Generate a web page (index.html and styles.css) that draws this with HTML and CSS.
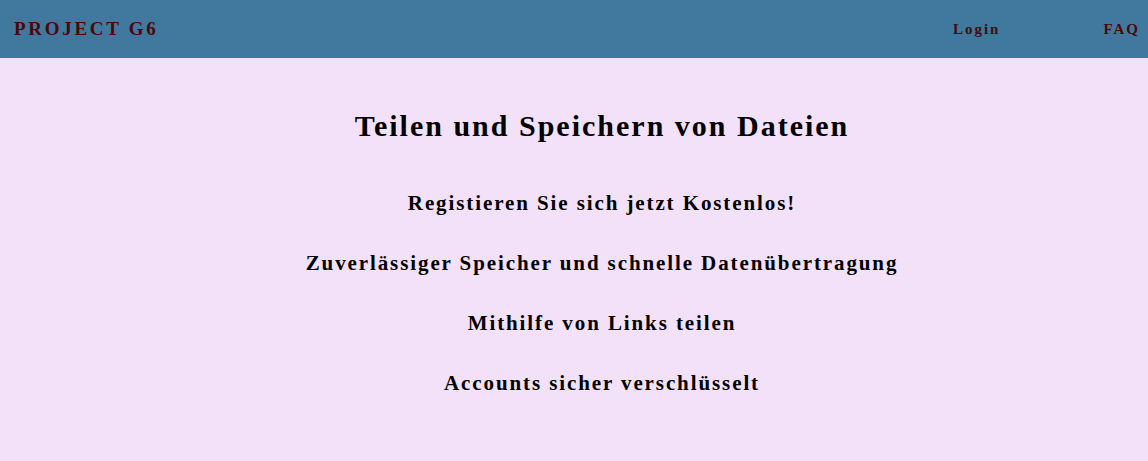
FILE: index.html
```html
<!DOCTYPE html>
<html lang="de">
<head>
<meta charset="utf-8">
<title>Project G6</title>
<link rel="stylesheet" href="styles.css">
</head>
<body>
<header class="topbar">
  <div class="brand">PROJECT G6</div>
  <nav class="nav">
    <a class="nav-link" href="#">Login</a>
    <a class="nav-link" href="#">FAQ</a>
  </nav>
</header>
<main class="hero">
  <h1 class="hero-title">Teilen und Speichern von Dateien</h1>
  <p class="feature">Registieren Sie sich jetzt Kostenlos!</p>
  <p class="feature">Zuverlässiger Speicher und schnelle Datenübertragung</p>
  <p class="feature">Mithilfe von Links teilen</p>
  <p class="feature">Accounts sicher verschlüsselt</p>
</main>
</body>
</html>
```
FILE: styles.css
```css
html, body {
  margin: 0;
  padding: 0;
}
body {
  background: #f2e1f8;
  font-family: "Liberation Serif", "Times New Roman", serif;
  font-weight: bold;
  color: #000;
  min-height: 461px;
}
.topbar {
  height: 58px;
  background: #41799e;
  display: flex;
  align-items: center;
  justify-content: space-between;
  padding: 0 8px 0 14px;
}
.brand {
  font-size: 19px;
  letter-spacing: 2.7px;
  color: #4a0808;
}
.nav {
  display: flex;
  gap: 103px;
}
.nav-link {
  font-size: 15px;
  letter-spacing: 2px;
  color: #4a0808;
  text-decoration: none;
}
.hero {
  display: flex;
  flex-direction: column;
  align-items: center;
  padding: 50px 0 0 56px;
}
.hero-title {
  margin: 0 0 47px;
  font-size: 30px;
  letter-spacing: 2px;
  line-height: 36px;
}
.feature {
  margin: 0 0 36px;
  font-size: 21px;
  letter-spacing: 1.9px;
  line-height: 24px;
}
```
